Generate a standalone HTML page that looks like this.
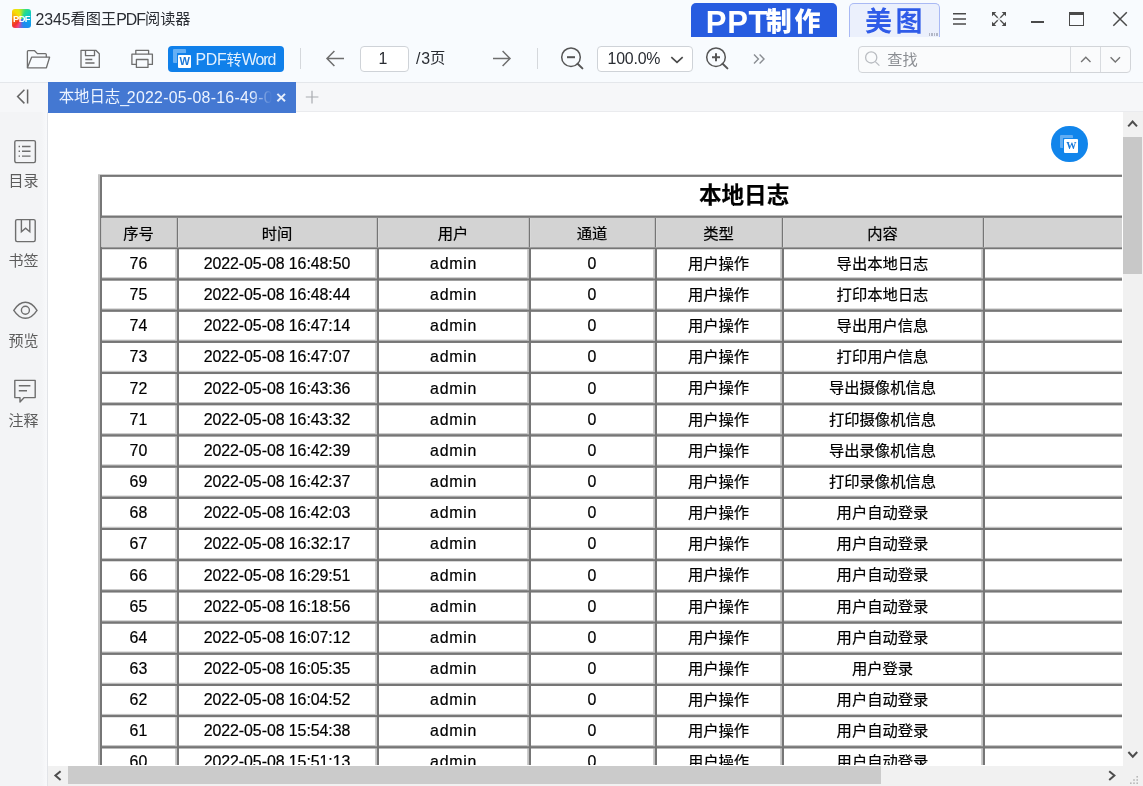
<!DOCTYPE html>
<html lang="zh-CN"><head><meta charset="utf-8"><title>2345看图王PDF阅读器</title>
<style>
html,body{margin:0;padding:0}
body{width:1143px;height:786px;overflow:hidden;position:relative;background:#fff;font-family:"Liberation Sans","Noto Sans CJK SC",sans-serif;-webkit-font-smoothing:antialiased}
.a{position:absolute;display:block}
.ln{display:flex;align-items:center;white-space:nowrap}
.ln>span{display:block;flex:none}
.cj{position:relative;display:block;flex:none;white-space:nowrap;line-height:1;letter-spacing:0;font-family:"Liberation Sans","Noto Sans CJK SC",sans-serif}
</style></head>
<body>
<div id="app" style="position:absolute;left:0;top:0;width:1143px;height:786px;will-change:transform">
<div class="a" style="left:0;top:0;width:1143px;height:82px;background:#f8fbfe"></div>
<div class="a" style="left:0;top:82px;width:1143px;height:1px;background:#e4e7eb"></div>
<div class="a" style="left:0;top:83px;width:1143px;height:29px;background:#f6f7f9"></div>
<div class="a" style="left:296px;top:111px;width:847px;height:1px;background:#eaebee"></div>
<div class="a" style="left:0;top:112px;width:41px;height:674px;background:#f3f4f6"></div>
<div class="a" style="left:41px;top:112px;width:6px;height:674px;background:linear-gradient(90deg,#f3f4f6,#f8f9fb)"></div>
<div class="a" style="left:47px;top:112px;width:1px;height:674px;background:#e2e4e8"></div>
<div class="a" style="left:48px;top:112px;width:1075px;height:654px;background:#fff"></div>
<div class="a" style="left:12px;top:9px;width:19px;height:19px;border-radius:3px;overflow:hidden;background:conic-gradient(from 0deg at 50% 52%,#9ae63c 0deg,#2fdc86 25deg,#14d4ae 50deg,#10b4dc 85deg,#1196ee 125deg,#2a84ee 165deg,#7a62d8 185deg,#ee4686 203deg,#f2302a 228deg,#f4641e 255deg,#f5a11c 280deg,#f8dc06 318deg,#e2e614 342deg,#9ae63c 360deg)">
<div class="a" style="left:-1px;top:3.9px;width:21px;height:12px;line-height:12px;font-size:9.3px;font-weight:bold;color:#fff;text-align:center;letter-spacing:-0.55px">PDF</div></div>
<div class="a ln" style="left:35.6px;top:8.6px;height:22px;line-height:22px;font-size:15.9px;color:#2a2d33;"><span style="letter-spacing:-0.1px;margin-right:0px">2345</span><span class="cj" style="width:45.6px;height:15.2px;font-size:15.2px;top:-0.6px;">看图王</span><span style="letter-spacing:-1px;margin-right:0px">PDF</span><span class="cj" style="width:45.6px;height:15.2px;font-size:15.2px;top:-0.6px;">阅读器</span></div>
<div class="a" style="left:691px;top:2.5px;width:146px;height:34.5px;background:#275ce0;border-radius:5px 5px 0 0"></div>
<div class="a" style="left:705.8px;top:4.6px;height:36px;line-height:36px;font-size:31px;font-weight:bold;color:#fff;letter-spacing:.7px;white-space:nowrap">PPT</div>
<div class="a" style="left:765.8px;top:9.3px"><span class="cj" style="width:54.8px;height:26.78px;font-size:26px;line-height:26.78px;font-weight:900;color:#fff;letter-spacing:2.8px;">制作</span></div>
<div class="a" style="left:849px;top:2.5px;width:91px;height:34.5px;box-sizing:border-box;background:#ebf0fc;border:1.6px solid #a9b9f4;border-bottom:none;border-radius:5px 5px 0 0"></div>
<div class="a" style="left:865px;top:8.2px"><span class="cj" style="width:57.5px;height:28.08px;font-size:27px;line-height:28.08px;font-weight:bold;color:#2f5be8;letter-spacing:3.5px;">美图</span></div>
<div class="a" style="left:928.5px;top:33.2px;width:10.4px;height:3px;background:repeating-linear-gradient(90deg,#a4a9b8 0,#a4a9b8 1.4px,transparent 1.4px,transparent 2.4px);opacity:.8"></div>
<svg class="a" style="left:950px;top:8px" width="20" height="22" viewBox="0 0 20 22" fill="none" stroke="#4a4a4a" stroke-width="1.5"><path d="M3 5.8H16M3 10.9H16M3 16H16"/></svg>
<svg class="a" style="left:989px;top:9px" width="20" height="20" viewBox="0 0 20 20" fill="#4a4a4a" stroke="#4a4a4a" stroke-width="1.25"><path d="M4.5 4.5L8.7 8.7M15.5 4.5L11.3 8.7M4.5 15.5L8.7 11.3M15.5 15.5L11.3 11.3" fill="none"/><path d="M3 3H7.3L3 7.3ZM17 3V7.3L12.7 3ZM3 17V12.7L7.3 17ZM17 17H12.7L17 12.7Z" stroke="none"/><rect x="8.8" y="8.8" width="2.4" height="2.4" fill="#c9cbcd" stroke="none"/></svg>
<div class="a" style="left:1031px;top:21.3px;width:13px;height:1.6px;background:#4a4a4a"></div>
<div class="a" style="left:1069px;top:12px;width:14.5px;height:13.5px;box-sizing:border-box;border:1.5px solid #4a4a4a;border-top-width:3px"></div>
<svg class="a" style="left:1110px;top:9px" width="20" height="20" viewBox="0 0 20 20" fill="none" stroke="#4a4a4a" stroke-width="1.5"><path d="M3.3 3.3L16.8 16.8M16.8 3.3L3.3 16.8"/></svg>
<svg class="a" style="left:24px;top:46px" width="30" height="26" viewBox="0 0 30 26" fill="none" stroke="#6e6e6e" stroke-width="1.3" stroke-linejoin="round"><path d="M3.4 21.6V5.6Q3.4 4.7 4.3 4.7H10.6L13.4 7.6H21.4Q22.3 7.6 22.3 8.5V11.2"/><path d="M7.6 11.2H25.6L22.4 21.8H3.4Z"/></svg>
<svg class="a" style="left:76px;top:46px" width="28" height="26" viewBox="0 0 28 26" fill="none" stroke="#6e6e6e" stroke-width="1.3" stroke-linejoin="round"><path d="M5 4.3H19.8L23.3 7.8V21.4H5Z"/><path d="M9.5 4.3V9.7H18.5V4.3"/><path d="M9.3 13.5H16.3M9.3 17H18.5"/></svg>
<svg class="a" style="left:128px;top:46px" width="28" height="26" viewBox="0 0 28 26" fill="none" stroke="#6e6e6e" stroke-width="1.3" stroke-linejoin="round"><path d="M7.8 8.2V4.3H20.6V8.2"/><path d="M8.4 18.4H3.9V8.2H24.4V18.4H20"/><path d="M8.4 13.5H20V21.4H8.4Z"/></svg>
<div class="a" style="left:168px;top:46px;width:116px;height:26px;background:#1080ea;border-radius:4px"></div>
<div class="a" style="left:173px;top:49.4px;width:13.3px;height:13.6px;background:#66b0f5;border-radius:1px"></div>
<div class="a" style="left:176.6px;top:53.1px;width:15px;height:15px;background:#1080ea"></div>
<div class="a" style="left:177.8px;top:54.6px;width:13.6px;height:13.6px;background:#fff;border-radius:1px;color:#1b78d8;font-size:11px;font-weight:bold;line-height:13.8px;text-align:center;letter-spacing:-.3px">W</div>
<div class="a ln" style="left:195.5px;top:48.9px;height:22px;line-height:22px;font-size:15.9px;color:#e2f0fe;"><span style="letter-spacing:-0.25px;margin-right:0px">PDF</span><span class="cj" style="width:15.3px;height:15.3px;font-size:15.3px;top:-0.7px;">转</span><span style="letter-spacing:-1.05px;margin-right:0px">Word</span></div>
<div class="a" style="left:300px;top:48px;width:1px;height:21px;background:#d5d8dc"></div>
<div class="a" style="left:537px;top:48px;width:1px;height:21px;background:#d5d8dc"></div>
<svg class="a" style="left:324px;top:48px" width="22" height="22" viewBox="0 0 22 22" fill="none" stroke="#6e6e6e" stroke-width="1.5" stroke-linejoin="miter"><path d="M20 10.5H3.2M10.4 3L3 10.5L10.4 18"/></svg>
<svg class="a" style="left:491px;top:48px" width="22" height="22" viewBox="0 0 22 22" fill="none" stroke="#6e6e6e" stroke-width="1.5"><path d="M2 10.5H18.8M11.6 3L19 10.5L11.6 18"/></svg>
<div class="a" style="left:360px;top:46px;width:49px;height:26px;box-sizing:border-box;background:#fff;border:1px solid #cfd3d8;border-radius:4px;text-align:center;line-height:24.6px;font-size:15.9px;color:#2a2d33;text-indent:-3px">1</div>
<div class="a ln" style="left:416px;top:48.1px;height:22px;line-height:22px;font-size:15.9px;color:#2a2d33;"><span style="letter-spacing:0.8px;margin-right:-0.8px">/3</span><span class="cj" style="width:15.3px;height:15.3px;font-size:15.3px;top:-1px;">页</span></div>
<svg class="a" style="left:560px;top:46px" width="26" height="26" viewBox="0 0 26 26" fill="none" stroke="#555" stroke-width="1.5"><circle cx="11" cy="11.2" r="9.3"/><path d="M17.6 17.8L22.4 22.4" stroke-width="2" stroke-linecap="round"/><path d="M7 11.2H15" stroke-width="2"/></svg>
<svg class="a" style="left:705px;top:46px" width="26" height="26" viewBox="0 0 26 26" fill="none" stroke="#555" stroke-width="1.5"><circle cx="11" cy="11.2" r="9.3"/><path d="M17.6 17.8L22.4 22.4" stroke-width="2" stroke-linecap="round"/><path d="M7 11.2H15M11 7.2V15.2" stroke-width="2"/></svg>
<div class="a" style="left:597px;top:46px;width:95.5px;height:26px;box-sizing:border-box;background:#fff;border:1px solid #cfd3d8;border-radius:4px"></div>
<div class="a ln" style="left:607.6px;top:48.1px;height:22px;line-height:22px;font-size:15.9px;color:#2a2d33;letter-spacing:-.22px">100.0%</div>
<svg class="a" style="left:668px;top:52px" width="18" height="14" viewBox="0 0 18 14" fill="none" stroke="#4a4a4a" stroke-width="1.7"><path d="M3.3 5.2L9 10.3L14.7 5.2"/></svg>
<svg class="a" style="left:750px;top:50px" width="18" height="18" viewBox="0 0 18 18" fill="none" stroke="#8a8d92" stroke-width="1.4"><path d="M4 4.6L8.4 9L4 13.4M9.6 4.6L14 9L9.6 13.4"/></svg>
<div class="a" style="left:858px;top:45.5px;width:273px;height:27.5px;box-sizing:border-box;background:#fafbfc;border:1px solid #d2d5d9;border-radius:4px"></div>
<div class="a" style="left:1070px;top:46.5px;width:1px;height:25.5px;background:#d8dbdf"></div>
<div class="a" style="left:1100px;top:46.5px;width:1px;height:25.5px;background:#d8dbdf"></div>
<svg class="a" style="left:862px;top:48.2px" width="20" height="20" viewBox="0 0 20 20" fill="none" stroke="#b9bcc1" stroke-width="1.3"><circle cx="9.2" cy="9.4" r="5.6"/><path d="M13.3 13.6L17.4 17.6"/></svg>
<div class="a ln" style="left:887.2px;top:48.4px;height:22px;line-height:22px;font-size:15.2px;color:#8a8d92;"><span class="cj" style="width:30.4px;height:15.2px;font-size:15.2px;">查找</span></div>
<svg class="a" style="left:1077px;top:52px" width="18" height="14" viewBox="0 0 18 14" fill="none" stroke="#747474" stroke-width="1.4"><path d="M4.1 10L8.8 5.3L13.5 10"/></svg>
<svg class="a" style="left:1106px;top:52px" width="18" height="14" viewBox="0 0 18 14" fill="none" stroke="#747474" stroke-width="1.4"><path d="M4.6 5.2L9.3 9.9L14 5.2"/></svg>
<svg class="a" style="left:14px;top:86px" width="18" height="22" viewBox="0 0 18 22" fill="none" stroke="#666" stroke-width="1.5"><path d="M10.4 3.8L3.6 10.6L10.4 17.4M13.6 3.6V17.6"/></svg>
<div class="a" style="left:48px;top:82px;width:248px;height:30.5px;background:#4478d2"></div>
<div class="a ln" style="left:58.7px;top:87.3px;height:22px;line-height:22px;font-size:15.9px;color:#edf4ff;letter-spacing:0.26px;width:213.3px;overflow:hidden;-webkit-mask-image:linear-gradient(90deg,#000 0,#000 191px,transparent 213px);mask-image:linear-gradient(90deg,#000 0,#000 191px,transparent 213px);"><span class="cj" style="width:61.6px;height:15.4px;font-size:15.4px;top:-1.3px;">本地日志</span><span><span style="margin-right:-2.6px">_</span>2022-05-08-16-49-0</span></div>
<svg class="a" style="left:274px;top:90px" width="14" height="14" viewBox="0 0 14 14" fill="none" stroke="#e8effb" stroke-width="2"><path d="M3.4 3.9L11 11.3M11 3.9L3.4 11.3"/></svg>
<svg class="a" style="left:304px;top:89px" width="16" height="16" viewBox="0 0 16 16" fill="none" stroke="#a8abb0" stroke-width="1.2"><path d="M8 1.8V14.4M1.8 8H14.4"/></svg>
<svg class="a" style="left:12px;top:138px" width="26" height="27" viewBox="0 0 26 27" fill="none" stroke="#6e6e6e" stroke-width="1.4"><rect x="2.8" y="2.6" width="20.6" height="22" rx="1.5"/><path d="M10 8.5H18.5M10 13.3H18.5M10 18.1H18.5M6.6 8.5H8M6.6 13.3H8M6.6 18.1H8"/></svg>
<div class="a ln" style="left:8.5px;top:170.7px;height:20px;line-height:20px;font-size:15px;color:#5c5c5c;"><span class="cj" style="width:30px;height:15px;font-size:15px;">目录</span></div>
<svg class="a" style="left:12px;top:217px" width="26" height="27" viewBox="0 0 26 27" fill="none" stroke="#6e6e6e" stroke-width="1.4"><rect x="3.6" y="2.6" width="19.6" height="22" rx="1.5"/><path d="M9.4 2.6V14.8L13.6 11.2L17.8 14.8V2.6"/></svg>
<div class="a ln" style="left:8.5px;top:250.7px;height:20px;line-height:20px;font-size:15px;color:#5c5c5c;"><span class="cj" style="width:30px;height:15px;font-size:15px;">书签</span></div>
<svg class="a" style="left:12px;top:298px" width="28" height="24" viewBox="0 0 28 24" fill="none" stroke="#6e6e6e" stroke-width="1.4"><path d="M1.8 12.3Q7 4.3 13.4 4.3Q19.8 4.3 25 12.3Q19.8 20.3 13.4 20.3Q7 20.3 1.8 12.3Z"/><circle cx="13.4" cy="12.3" r="4"/></svg>
<div class="a ln" style="left:8.5px;top:330.7px;height:20px;line-height:20px;font-size:15px;color:#5c5c5c;"><span class="cj" style="width:30px;height:15px;font-size:15px;">预览</span></div>
<svg class="a" style="left:12px;top:377px" width="26" height="28" viewBox="0 0 26 28" fill="none" stroke="#6e6e6e" stroke-width="1.4" stroke-linejoin="round"><path d="M2.8 3.4H23.2V20.6H12.2L8 25V20.6H2.8Z"/><path d="M6.8 8.8H18.4M6.8 13.8H15"/></svg>
<div class="a ln" style="left:8.5px;top:410.7px;height:20px;line-height:20px;font-size:15px;color:#5c5c5c;"><span class="cj" style="width:30px;height:15px;font-size:15px;">注释</span></div>
<svg class="a" style="left:98px;top:174px" width="1024" height="591" viewBox="0 0 1024 591" shape-rendering="auto"><rect x="3" y="44" width="1030" height="29.2" fill="#d3d3d3"/><rect x="0" y="0" width="2" height="591" fill="#c2c2c2"/><rect x="2" y="1" width="2" height="591" fill="#767676"/><rect x="3.1" y="44" width="1" height="29.1" fill="#d3d3d3"/><rect x="0" y="0" width="1030" height="1" fill="#cfcfcf"/><rect x="2" y="1" width="1030" height="1.9" fill="#767676"/><rect x="4" y="41.05" width="1030" height="0.9" fill="#c2c2c2"/><rect x="3" y="41.85" width="1030" height="2" fill="#767676"/><rect x="3" y="73.3" width="1030" height="1.95" fill="#767676"/><rect x="4" y="103.24" width="1030" height="1.3" fill="#c2c2c2"/><rect x="3" y="104.49" width="1030" height="1.95" fill="#767676"/><rect x="4" y="134.43" width="1030" height="1.3" fill="#c2c2c2"/><rect x="3" y="135.68" width="1030" height="1.95" fill="#767676"/><rect x="4" y="165.62" width="1030" height="1.3" fill="#c2c2c2"/><rect x="3" y="166.87" width="1030" height="1.95" fill="#767676"/><rect x="4" y="196.81" width="1030" height="1.3" fill="#c2c2c2"/><rect x="3" y="198.06" width="1030" height="1.95" fill="#767676"/><rect x="4" y="228" width="1030" height="1.3" fill="#c2c2c2"/><rect x="3" y="229.25" width="1030" height="1.95" fill="#767676"/><rect x="4" y="259.19" width="1030" height="1.3" fill="#c2c2c2"/><rect x="3" y="260.44" width="1030" height="1.95" fill="#767676"/><rect x="4" y="290.38" width="1030" height="1.3" fill="#c2c2c2"/><rect x="3" y="291.63" width="1030" height="1.95" fill="#767676"/><rect x="4" y="321.57" width="1030" height="1.3" fill="#c2c2c2"/><rect x="3" y="322.82" width="1030" height="1.95" fill="#767676"/><rect x="4" y="352.76" width="1030" height="1.3" fill="#c2c2c2"/><rect x="3" y="354.01" width="1030" height="1.95" fill="#767676"/><rect x="4" y="383.95" width="1030" height="1.3" fill="#c2c2c2"/><rect x="3" y="385.2" width="1030" height="1.95" fill="#767676"/><rect x="4" y="415.14" width="1030" height="1.3" fill="#c2c2c2"/><rect x="3" y="416.39" width="1030" height="1.95" fill="#767676"/><rect x="4" y="446.33" width="1030" height="1.3" fill="#c2c2c2"/><rect x="3" y="447.58" width="1030" height="1.95" fill="#767676"/><rect x="4" y="477.52" width="1030" height="1.3" fill="#c2c2c2"/><rect x="3" y="478.77" width="1030" height="1.95" fill="#767676"/><rect x="4" y="508.71" width="1030" height="1.3" fill="#c2c2c2"/><rect x="3" y="509.96" width="1030" height="1.95" fill="#767676"/><rect x="4" y="539.9" width="1030" height="1.3" fill="#c2c2c2"/><rect x="3" y="541.15" width="1030" height="1.95" fill="#767676"/><rect x="4" y="571.09" width="1030" height="1.3" fill="#c2c2c2"/><rect x="3" y="572.34" width="1030" height="1.95" fill="#767676"/><rect x="78.8" y="44" width="1.3" height="29.2" fill="#767676"/><rect x="80.1" y="44" width="1" height="29.2" fill="#dadada"/><rect x="77.2" y="75" width="1.8" height="591" fill="#c2c2c2"/><rect x="79" y="75" width="2" height="591" fill="#767676"/><rect x="278.8" y="44" width="1.3" height="29.2" fill="#767676"/><rect x="280.1" y="44" width="1" height="29.2" fill="#dadada"/><rect x="277.2" y="75" width="1.8" height="591" fill="#c2c2c2"/><rect x="279" y="75" width="2" height="591" fill="#767676"/><rect x="430.8" y="44" width="1.3" height="29.2" fill="#767676"/><rect x="432.1" y="44" width="1" height="29.2" fill="#dadada"/><rect x="429.2" y="75" width="1.8" height="591" fill="#c2c2c2"/><rect x="431" y="75" width="2" height="591" fill="#767676"/><rect x="556.8" y="44" width="1.3" height="29.2" fill="#767676"/><rect x="558.1" y="44" width="1" height="29.2" fill="#dadada"/><rect x="555.2" y="75" width="1.8" height="591" fill="#c2c2c2"/><rect x="557" y="75" width="2" height="591" fill="#767676"/><rect x="683.8" y="44" width="1.3" height="29.2" fill="#767676"/><rect x="685.1" y="44" width="1" height="29.2" fill="#dadada"/><rect x="682.2" y="75" width="1.8" height="591" fill="#c2c2c2"/><rect x="684" y="75" width="2" height="591" fill="#767676"/><rect x="884.8" y="44" width="1.3" height="29.2" fill="#767676"/><rect x="886.1" y="44" width="1" height="29.2" fill="#dadada"/><rect x="883.2" y="75" width="1.8" height="591" fill="#c2c2c2"/><rect x="885" y="75" width="2" height="591" fill="#767676"/><rect x="3" y="104.49" width="1030" height="1.95" fill="#767676"/><rect x="3" y="135.68" width="1030" height="1.95" fill="#767676"/><rect x="3" y="166.87" width="1030" height="1.95" fill="#767676"/><rect x="3" y="198.06" width="1030" height="1.95" fill="#767676"/><rect x="3" y="229.25" width="1030" height="1.95" fill="#767676"/><rect x="3" y="260.44" width="1030" height="1.95" fill="#767676"/><rect x="3" y="291.63" width="1030" height="1.95" fill="#767676"/><rect x="3" y="322.82" width="1030" height="1.95" fill="#767676"/><rect x="3" y="354.01" width="1030" height="1.95" fill="#767676"/><rect x="3" y="385.2" width="1030" height="1.95" fill="#767676"/><rect x="3" y="416.39" width="1030" height="1.95" fill="#767676"/><rect x="3" y="447.58" width="1030" height="1.95" fill="#767676"/><rect x="3" y="478.77" width="1030" height="1.95" fill="#767676"/><rect x="3" y="509.96" width="1030" height="1.95" fill="#767676"/><rect x="3" y="541.15" width="1030" height="1.95" fill="#767676"/><rect x="3" y="572.34" width="1030" height="1.95" fill="#767676"/></svg>
<div class="a" style="left:98px;top:174px;width:1024px;height:591px;overflow:hidden">
<div class="a ln" style="left:496.1px;top:9.9px;height:24px;line-height:24px;font-size:22.6px;color:#000;font-weight:bold;width:300px;justify-content:center;-webkit-text-stroke:0.2px #000;"><span class="cj" style="width:90.4px;height:22.6px;font-size:22.6px;">本地日志</span></div>
<div class="a ln" style="left:-109.5px;top:47.8px;height:24px;line-height:24px;font-size:15.3px;color:#000;width:300px;justify-content:center;-webkit-text-stroke:0.2px #000;"><span class="cj" style="width:30.6px;height:15.3px;font-size:15.3px;">序号</span></div>
<div class="a ln" style="left:29px;top:47.8px;height:24px;line-height:24px;font-size:15.3px;color:#000;width:300px;justify-content:center;-webkit-text-stroke:0.2px #000;"><span class="cj" style="width:30.6px;height:15.3px;font-size:15.3px;">时间</span></div>
<div class="a ln" style="left:205px;top:47.8px;height:24px;line-height:24px;font-size:15.3px;color:#000;width:300px;justify-content:center;-webkit-text-stroke:0.2px #000;"><span class="cj" style="width:30.6px;height:15.3px;font-size:15.3px;">用户</span></div>
<div class="a ln" style="left:344px;top:47.8px;height:24px;line-height:24px;font-size:15.3px;color:#000;width:300px;justify-content:center;-webkit-text-stroke:0.2px #000;"><span class="cj" style="width:30.6px;height:15.3px;font-size:15.3px;">通道</span></div>
<div class="a ln" style="left:470.5px;top:47.8px;height:24px;line-height:24px;font-size:15.3px;color:#000;width:300px;justify-content:center;-webkit-text-stroke:0.2px #000;"><span class="cj" style="width:30.6px;height:15.3px;font-size:15.3px;">类型</span></div>
<div class="a ln" style="left:634.5px;top:47.8px;height:24px;line-height:24px;font-size:15.3px;color:#000;width:300px;justify-content:center;-webkit-text-stroke:0.2px #000;"><span class="cj" style="width:30.6px;height:15.3px;font-size:15.3px;">内容</span></div>
<div class="a ln" style="left:-109.5px;top:77.9px;height:24px;line-height:24px;font-size:15.9px;color:#000;letter-spacing:0.1px;width:300px;justify-content:center;-webkit-text-stroke:0.2px #000;"><span>76</span></div>
<div class="a ln" style="left:29px;top:77.9px;height:24px;line-height:24px;font-size:15.9px;color:#000;letter-spacing:-0.05px;width:300px;justify-content:center;-webkit-text-stroke:0.2px #000;"><span>2022-05-08&nbsp;16:48:50</span></div>
<div class="a ln" style="left:205.6px;top:77.9px;height:24px;line-height:24px;font-size:15.9px;color:#000;letter-spacing:0.75px;width:300px;justify-content:center;-webkit-text-stroke:0.2px #000;"><span>admin</span></div>
<div class="a ln" style="left:344px;top:77.9px;height:24px;line-height:24px;font-size:15.9px;color:#000;width:300px;justify-content:center;-webkit-text-stroke:0.2px #000;"><span>0</span></div>
<div class="a ln" style="left:470.5px;top:77.5px;height:24px;line-height:24px;font-size:15.3px;color:#000;width:300px;justify-content:center;-webkit-text-stroke:0.2px #000;"><span class="cj" style="width:61.2px;height:15.3px;font-size:15.3px;">用户操作</span></div>
<div class="a ln" style="left:634.5px;top:77.5px;height:24px;line-height:24px;font-size:15.3px;color:#000;width:300px;justify-content:center;-webkit-text-stroke:0.2px #000;"><span class="cj" style="width:91.8px;height:15.3px;font-size:15.3px;">导出本地日志</span></div>
<div class="a ln" style="left:-109.5px;top:109.06px;height:24px;line-height:24px;font-size:15.9px;color:#000;letter-spacing:0.1px;width:300px;justify-content:center;-webkit-text-stroke:0.2px #000;"><span>75</span></div>
<div class="a ln" style="left:29px;top:109.06px;height:24px;line-height:24px;font-size:15.9px;color:#000;letter-spacing:-0.05px;width:300px;justify-content:center;-webkit-text-stroke:0.2px #000;"><span>2022-05-08&nbsp;16:48:44</span></div>
<div class="a ln" style="left:205.6px;top:109.06px;height:24px;line-height:24px;font-size:15.9px;color:#000;letter-spacing:0.75px;width:300px;justify-content:center;-webkit-text-stroke:0.2px #000;"><span>admin</span></div>
<div class="a ln" style="left:344px;top:109.06px;height:24px;line-height:24px;font-size:15.9px;color:#000;width:300px;justify-content:center;-webkit-text-stroke:0.2px #000;"><span>0</span></div>
<div class="a ln" style="left:470.5px;top:108.66px;height:24px;line-height:24px;font-size:15.3px;color:#000;width:300px;justify-content:center;-webkit-text-stroke:0.2px #000;"><span class="cj" style="width:61.2px;height:15.3px;font-size:15.3px;">用户操作</span></div>
<div class="a ln" style="left:634.5px;top:108.66px;height:24px;line-height:24px;font-size:15.3px;color:#000;width:300px;justify-content:center;-webkit-text-stroke:0.2px #000;"><span class="cj" style="width:91.8px;height:15.3px;font-size:15.3px;">打印本地日志</span></div>
<div class="a ln" style="left:-109.5px;top:140.22px;height:24px;line-height:24px;font-size:15.9px;color:#000;letter-spacing:0.1px;width:300px;justify-content:center;-webkit-text-stroke:0.2px #000;"><span>74</span></div>
<div class="a ln" style="left:29px;top:140.22px;height:24px;line-height:24px;font-size:15.9px;color:#000;letter-spacing:-0.05px;width:300px;justify-content:center;-webkit-text-stroke:0.2px #000;"><span>2022-05-08&nbsp;16:47:14</span></div>
<div class="a ln" style="left:205.6px;top:140.22px;height:24px;line-height:24px;font-size:15.9px;color:#000;letter-spacing:0.75px;width:300px;justify-content:center;-webkit-text-stroke:0.2px #000;"><span>admin</span></div>
<div class="a ln" style="left:344px;top:140.22px;height:24px;line-height:24px;font-size:15.9px;color:#000;width:300px;justify-content:center;-webkit-text-stroke:0.2px #000;"><span>0</span></div>
<div class="a ln" style="left:470.5px;top:139.82px;height:24px;line-height:24px;font-size:15.3px;color:#000;width:300px;justify-content:center;-webkit-text-stroke:0.2px #000;"><span class="cj" style="width:61.2px;height:15.3px;font-size:15.3px;">用户操作</span></div>
<div class="a ln" style="left:634.5px;top:139.82px;height:24px;line-height:24px;font-size:15.3px;color:#000;width:300px;justify-content:center;-webkit-text-stroke:0.2px #000;"><span class="cj" style="width:91.8px;height:15.3px;font-size:15.3px;">导出用户信息</span></div>
<div class="a ln" style="left:-109.5px;top:171.38px;height:24px;line-height:24px;font-size:15.9px;color:#000;letter-spacing:0.1px;width:300px;justify-content:center;-webkit-text-stroke:0.2px #000;"><span>73</span></div>
<div class="a ln" style="left:29px;top:171.38px;height:24px;line-height:24px;font-size:15.9px;color:#000;letter-spacing:-0.05px;width:300px;justify-content:center;-webkit-text-stroke:0.2px #000;"><span>2022-05-08&nbsp;16:47:07</span></div>
<div class="a ln" style="left:205.6px;top:171.38px;height:24px;line-height:24px;font-size:15.9px;color:#000;letter-spacing:0.75px;width:300px;justify-content:center;-webkit-text-stroke:0.2px #000;"><span>admin</span></div>
<div class="a ln" style="left:344px;top:171.38px;height:24px;line-height:24px;font-size:15.9px;color:#000;width:300px;justify-content:center;-webkit-text-stroke:0.2px #000;"><span>0</span></div>
<div class="a ln" style="left:470.5px;top:170.98px;height:24px;line-height:24px;font-size:15.3px;color:#000;width:300px;justify-content:center;-webkit-text-stroke:0.2px #000;"><span class="cj" style="width:61.2px;height:15.3px;font-size:15.3px;">用户操作</span></div>
<div class="a ln" style="left:634.5px;top:170.98px;height:24px;line-height:24px;font-size:15.3px;color:#000;width:300px;justify-content:center;-webkit-text-stroke:0.2px #000;"><span class="cj" style="width:91.8px;height:15.3px;font-size:15.3px;">打印用户信息</span></div>
<div class="a ln" style="left:-109.5px;top:202.54px;height:24px;line-height:24px;font-size:15.9px;color:#000;letter-spacing:0.1px;width:300px;justify-content:center;-webkit-text-stroke:0.2px #000;"><span>72</span></div>
<div class="a ln" style="left:29px;top:202.54px;height:24px;line-height:24px;font-size:15.9px;color:#000;letter-spacing:-0.05px;width:300px;justify-content:center;-webkit-text-stroke:0.2px #000;"><span>2022-05-08&nbsp;16:43:36</span></div>
<div class="a ln" style="left:205.6px;top:202.54px;height:24px;line-height:24px;font-size:15.9px;color:#000;letter-spacing:0.75px;width:300px;justify-content:center;-webkit-text-stroke:0.2px #000;"><span>admin</span></div>
<div class="a ln" style="left:344px;top:202.54px;height:24px;line-height:24px;font-size:15.9px;color:#000;width:300px;justify-content:center;-webkit-text-stroke:0.2px #000;"><span>0</span></div>
<div class="a ln" style="left:470.5px;top:202.14px;height:24px;line-height:24px;font-size:15.3px;color:#000;width:300px;justify-content:center;-webkit-text-stroke:0.2px #000;"><span class="cj" style="width:61.2px;height:15.3px;font-size:15.3px;">用户操作</span></div>
<div class="a ln" style="left:634.5px;top:202.14px;height:24px;line-height:24px;font-size:15.3px;color:#000;width:300px;justify-content:center;-webkit-text-stroke:0.2px #000;"><span class="cj" style="width:107.1px;height:15.3px;font-size:15.3px;">导出摄像机信息</span></div>
<div class="a ln" style="left:-109.5px;top:233.7px;height:24px;line-height:24px;font-size:15.9px;color:#000;letter-spacing:0.1px;width:300px;justify-content:center;-webkit-text-stroke:0.2px #000;"><span>71</span></div>
<div class="a ln" style="left:29px;top:233.7px;height:24px;line-height:24px;font-size:15.9px;color:#000;letter-spacing:-0.05px;width:300px;justify-content:center;-webkit-text-stroke:0.2px #000;"><span>2022-05-08&nbsp;16:43:32</span></div>
<div class="a ln" style="left:205.6px;top:233.7px;height:24px;line-height:24px;font-size:15.9px;color:#000;letter-spacing:0.75px;width:300px;justify-content:center;-webkit-text-stroke:0.2px #000;"><span>admin</span></div>
<div class="a ln" style="left:344px;top:233.7px;height:24px;line-height:24px;font-size:15.9px;color:#000;width:300px;justify-content:center;-webkit-text-stroke:0.2px #000;"><span>0</span></div>
<div class="a ln" style="left:470.5px;top:233.3px;height:24px;line-height:24px;font-size:15.3px;color:#000;width:300px;justify-content:center;-webkit-text-stroke:0.2px #000;"><span class="cj" style="width:61.2px;height:15.3px;font-size:15.3px;">用户操作</span></div>
<div class="a ln" style="left:634.5px;top:233.3px;height:24px;line-height:24px;font-size:15.3px;color:#000;width:300px;justify-content:center;-webkit-text-stroke:0.2px #000;"><span class="cj" style="width:107.1px;height:15.3px;font-size:15.3px;">打印摄像机信息</span></div>
<div class="a ln" style="left:-109.5px;top:264.86px;height:24px;line-height:24px;font-size:15.9px;color:#000;letter-spacing:0.1px;width:300px;justify-content:center;-webkit-text-stroke:0.2px #000;"><span>70</span></div>
<div class="a ln" style="left:29px;top:264.86px;height:24px;line-height:24px;font-size:15.9px;color:#000;letter-spacing:-0.05px;width:300px;justify-content:center;-webkit-text-stroke:0.2px #000;"><span>2022-05-08&nbsp;16:42:39</span></div>
<div class="a ln" style="left:205.6px;top:264.86px;height:24px;line-height:24px;font-size:15.9px;color:#000;letter-spacing:0.75px;width:300px;justify-content:center;-webkit-text-stroke:0.2px #000;"><span>admin</span></div>
<div class="a ln" style="left:344px;top:264.86px;height:24px;line-height:24px;font-size:15.9px;color:#000;width:300px;justify-content:center;-webkit-text-stroke:0.2px #000;"><span>0</span></div>
<div class="a ln" style="left:470.5px;top:264.46px;height:24px;line-height:24px;font-size:15.3px;color:#000;width:300px;justify-content:center;-webkit-text-stroke:0.2px #000;"><span class="cj" style="width:61.2px;height:15.3px;font-size:15.3px;">用户操作</span></div>
<div class="a ln" style="left:634.5px;top:264.46px;height:24px;line-height:24px;font-size:15.3px;color:#000;width:300px;justify-content:center;-webkit-text-stroke:0.2px #000;"><span class="cj" style="width:107.1px;height:15.3px;font-size:15.3px;">导出录像机信息</span></div>
<div class="a ln" style="left:-109.5px;top:296.02px;height:24px;line-height:24px;font-size:15.9px;color:#000;letter-spacing:0.1px;width:300px;justify-content:center;-webkit-text-stroke:0.2px #000;"><span>69</span></div>
<div class="a ln" style="left:29px;top:296.02px;height:24px;line-height:24px;font-size:15.9px;color:#000;letter-spacing:-0.05px;width:300px;justify-content:center;-webkit-text-stroke:0.2px #000;"><span>2022-05-08&nbsp;16:42:37</span></div>
<div class="a ln" style="left:205.6px;top:296.02px;height:24px;line-height:24px;font-size:15.9px;color:#000;letter-spacing:0.75px;width:300px;justify-content:center;-webkit-text-stroke:0.2px #000;"><span>admin</span></div>
<div class="a ln" style="left:344px;top:296.02px;height:24px;line-height:24px;font-size:15.9px;color:#000;width:300px;justify-content:center;-webkit-text-stroke:0.2px #000;"><span>0</span></div>
<div class="a ln" style="left:470.5px;top:295.62px;height:24px;line-height:24px;font-size:15.3px;color:#000;width:300px;justify-content:center;-webkit-text-stroke:0.2px #000;"><span class="cj" style="width:61.2px;height:15.3px;font-size:15.3px;">用户操作</span></div>
<div class="a ln" style="left:634.5px;top:295.62px;height:24px;line-height:24px;font-size:15.3px;color:#000;width:300px;justify-content:center;-webkit-text-stroke:0.2px #000;"><span class="cj" style="width:107.1px;height:15.3px;font-size:15.3px;">打印录像机信息</span></div>
<div class="a ln" style="left:-109.5px;top:327.18px;height:24px;line-height:24px;font-size:15.9px;color:#000;letter-spacing:0.1px;width:300px;justify-content:center;-webkit-text-stroke:0.2px #000;"><span>68</span></div>
<div class="a ln" style="left:29px;top:327.18px;height:24px;line-height:24px;font-size:15.9px;color:#000;letter-spacing:-0.05px;width:300px;justify-content:center;-webkit-text-stroke:0.2px #000;"><span>2022-05-08&nbsp;16:42:03</span></div>
<div class="a ln" style="left:205.6px;top:327.18px;height:24px;line-height:24px;font-size:15.9px;color:#000;letter-spacing:0.75px;width:300px;justify-content:center;-webkit-text-stroke:0.2px #000;"><span>admin</span></div>
<div class="a ln" style="left:344px;top:327.18px;height:24px;line-height:24px;font-size:15.9px;color:#000;width:300px;justify-content:center;-webkit-text-stroke:0.2px #000;"><span>0</span></div>
<div class="a ln" style="left:470.5px;top:326.78px;height:24px;line-height:24px;font-size:15.3px;color:#000;width:300px;justify-content:center;-webkit-text-stroke:0.2px #000;"><span class="cj" style="width:61.2px;height:15.3px;font-size:15.3px;">用户操作</span></div>
<div class="a ln" style="left:634.5px;top:326.78px;height:24px;line-height:24px;font-size:15.3px;color:#000;width:300px;justify-content:center;-webkit-text-stroke:0.2px #000;"><span class="cj" style="width:91.8px;height:15.3px;font-size:15.3px;">用户自动登录</span></div>
<div class="a ln" style="left:-109.5px;top:358.34px;height:24px;line-height:24px;font-size:15.9px;color:#000;letter-spacing:0.1px;width:300px;justify-content:center;-webkit-text-stroke:0.2px #000;"><span>67</span></div>
<div class="a ln" style="left:29px;top:358.34px;height:24px;line-height:24px;font-size:15.9px;color:#000;letter-spacing:-0.05px;width:300px;justify-content:center;-webkit-text-stroke:0.2px #000;"><span>2022-05-08&nbsp;16:32:17</span></div>
<div class="a ln" style="left:205.6px;top:358.34px;height:24px;line-height:24px;font-size:15.9px;color:#000;letter-spacing:0.75px;width:300px;justify-content:center;-webkit-text-stroke:0.2px #000;"><span>admin</span></div>
<div class="a ln" style="left:344px;top:358.34px;height:24px;line-height:24px;font-size:15.9px;color:#000;width:300px;justify-content:center;-webkit-text-stroke:0.2px #000;"><span>0</span></div>
<div class="a ln" style="left:470.5px;top:357.94px;height:24px;line-height:24px;font-size:15.3px;color:#000;width:300px;justify-content:center;-webkit-text-stroke:0.2px #000;"><span class="cj" style="width:61.2px;height:15.3px;font-size:15.3px;">用户操作</span></div>
<div class="a ln" style="left:634.5px;top:357.94px;height:24px;line-height:24px;font-size:15.3px;color:#000;width:300px;justify-content:center;-webkit-text-stroke:0.2px #000;"><span class="cj" style="width:91.8px;height:15.3px;font-size:15.3px;">用户自动登录</span></div>
<div class="a ln" style="left:-109.5px;top:389.5px;height:24px;line-height:24px;font-size:15.9px;color:#000;letter-spacing:0.1px;width:300px;justify-content:center;-webkit-text-stroke:0.2px #000;"><span>66</span></div>
<div class="a ln" style="left:29px;top:389.5px;height:24px;line-height:24px;font-size:15.9px;color:#000;letter-spacing:-0.05px;width:300px;justify-content:center;-webkit-text-stroke:0.2px #000;"><span>2022-05-08&nbsp;16:29:51</span></div>
<div class="a ln" style="left:205.6px;top:389.5px;height:24px;line-height:24px;font-size:15.9px;color:#000;letter-spacing:0.75px;width:300px;justify-content:center;-webkit-text-stroke:0.2px #000;"><span>admin</span></div>
<div class="a ln" style="left:344px;top:389.5px;height:24px;line-height:24px;font-size:15.9px;color:#000;width:300px;justify-content:center;-webkit-text-stroke:0.2px #000;"><span>0</span></div>
<div class="a ln" style="left:470.5px;top:389.1px;height:24px;line-height:24px;font-size:15.3px;color:#000;width:300px;justify-content:center;-webkit-text-stroke:0.2px #000;"><span class="cj" style="width:61.2px;height:15.3px;font-size:15.3px;">用户操作</span></div>
<div class="a ln" style="left:634.5px;top:389.1px;height:24px;line-height:24px;font-size:15.3px;color:#000;width:300px;justify-content:center;-webkit-text-stroke:0.2px #000;"><span class="cj" style="width:91.8px;height:15.3px;font-size:15.3px;">用户自动登录</span></div>
<div class="a ln" style="left:-109.5px;top:420.66px;height:24px;line-height:24px;font-size:15.9px;color:#000;letter-spacing:0.1px;width:300px;justify-content:center;-webkit-text-stroke:0.2px #000;"><span>65</span></div>
<div class="a ln" style="left:29px;top:420.66px;height:24px;line-height:24px;font-size:15.9px;color:#000;letter-spacing:-0.05px;width:300px;justify-content:center;-webkit-text-stroke:0.2px #000;"><span>2022-05-08&nbsp;16:18:56</span></div>
<div class="a ln" style="left:205.6px;top:420.66px;height:24px;line-height:24px;font-size:15.9px;color:#000;letter-spacing:0.75px;width:300px;justify-content:center;-webkit-text-stroke:0.2px #000;"><span>admin</span></div>
<div class="a ln" style="left:344px;top:420.66px;height:24px;line-height:24px;font-size:15.9px;color:#000;width:300px;justify-content:center;-webkit-text-stroke:0.2px #000;"><span>0</span></div>
<div class="a ln" style="left:470.5px;top:420.26px;height:24px;line-height:24px;font-size:15.3px;color:#000;width:300px;justify-content:center;-webkit-text-stroke:0.2px #000;"><span class="cj" style="width:61.2px;height:15.3px;font-size:15.3px;">用户操作</span></div>
<div class="a ln" style="left:634.5px;top:420.26px;height:24px;line-height:24px;font-size:15.3px;color:#000;width:300px;justify-content:center;-webkit-text-stroke:0.2px #000;"><span class="cj" style="width:91.8px;height:15.3px;font-size:15.3px;">用户自动登录</span></div>
<div class="a ln" style="left:-109.5px;top:451.82px;height:24px;line-height:24px;font-size:15.9px;color:#000;letter-spacing:0.1px;width:300px;justify-content:center;-webkit-text-stroke:0.2px #000;"><span>64</span></div>
<div class="a ln" style="left:29px;top:451.82px;height:24px;line-height:24px;font-size:15.9px;color:#000;letter-spacing:-0.05px;width:300px;justify-content:center;-webkit-text-stroke:0.2px #000;"><span>2022-05-08&nbsp;16:07:12</span></div>
<div class="a ln" style="left:205.6px;top:451.82px;height:24px;line-height:24px;font-size:15.9px;color:#000;letter-spacing:0.75px;width:300px;justify-content:center;-webkit-text-stroke:0.2px #000;"><span>admin</span></div>
<div class="a ln" style="left:344px;top:451.82px;height:24px;line-height:24px;font-size:15.9px;color:#000;width:300px;justify-content:center;-webkit-text-stroke:0.2px #000;"><span>0</span></div>
<div class="a ln" style="left:470.5px;top:451.42px;height:24px;line-height:24px;font-size:15.3px;color:#000;width:300px;justify-content:center;-webkit-text-stroke:0.2px #000;"><span class="cj" style="width:61.2px;height:15.3px;font-size:15.3px;">用户操作</span></div>
<div class="a ln" style="left:634.5px;top:451.42px;height:24px;line-height:24px;font-size:15.3px;color:#000;width:300px;justify-content:center;-webkit-text-stroke:0.2px #000;"><span class="cj" style="width:91.8px;height:15.3px;font-size:15.3px;">用户自动登录</span></div>
<div class="a ln" style="left:-109.5px;top:482.98px;height:24px;line-height:24px;font-size:15.9px;color:#000;letter-spacing:0.1px;width:300px;justify-content:center;-webkit-text-stroke:0.2px #000;"><span>63</span></div>
<div class="a ln" style="left:29px;top:482.98px;height:24px;line-height:24px;font-size:15.9px;color:#000;letter-spacing:-0.05px;width:300px;justify-content:center;-webkit-text-stroke:0.2px #000;"><span>2022-05-08&nbsp;16:05:35</span></div>
<div class="a ln" style="left:205.6px;top:482.98px;height:24px;line-height:24px;font-size:15.9px;color:#000;letter-spacing:0.75px;width:300px;justify-content:center;-webkit-text-stroke:0.2px #000;"><span>admin</span></div>
<div class="a ln" style="left:344px;top:482.98px;height:24px;line-height:24px;font-size:15.9px;color:#000;width:300px;justify-content:center;-webkit-text-stroke:0.2px #000;"><span>0</span></div>
<div class="a ln" style="left:470.5px;top:482.58px;height:24px;line-height:24px;font-size:15.3px;color:#000;width:300px;justify-content:center;-webkit-text-stroke:0.2px #000;"><span class="cj" style="width:61.2px;height:15.3px;font-size:15.3px;">用户操作</span></div>
<div class="a ln" style="left:634.5px;top:482.58px;height:24px;line-height:24px;font-size:15.3px;color:#000;width:300px;justify-content:center;-webkit-text-stroke:0.2px #000;"><span class="cj" style="width:61.2px;height:15.3px;font-size:15.3px;">用户登录</span></div>
<div class="a ln" style="left:-109.5px;top:514.14px;height:24px;line-height:24px;font-size:15.9px;color:#000;letter-spacing:0.1px;width:300px;justify-content:center;-webkit-text-stroke:0.2px #000;"><span>62</span></div>
<div class="a ln" style="left:29px;top:514.14px;height:24px;line-height:24px;font-size:15.9px;color:#000;letter-spacing:-0.05px;width:300px;justify-content:center;-webkit-text-stroke:0.2px #000;"><span>2022-05-08&nbsp;16:04:52</span></div>
<div class="a ln" style="left:205.6px;top:514.14px;height:24px;line-height:24px;font-size:15.9px;color:#000;letter-spacing:0.75px;width:300px;justify-content:center;-webkit-text-stroke:0.2px #000;"><span>admin</span></div>
<div class="a ln" style="left:344px;top:514.14px;height:24px;line-height:24px;font-size:15.9px;color:#000;width:300px;justify-content:center;-webkit-text-stroke:0.2px #000;"><span>0</span></div>
<div class="a ln" style="left:470.5px;top:513.74px;height:24px;line-height:24px;font-size:15.3px;color:#000;width:300px;justify-content:center;-webkit-text-stroke:0.2px #000;"><span class="cj" style="width:61.2px;height:15.3px;font-size:15.3px;">用户操作</span></div>
<div class="a ln" style="left:634.5px;top:513.74px;height:24px;line-height:24px;font-size:15.3px;color:#000;width:300px;justify-content:center;-webkit-text-stroke:0.2px #000;"><span class="cj" style="width:91.8px;height:15.3px;font-size:15.3px;">用户自动登录</span></div>
<div class="a ln" style="left:-109.5px;top:545.3px;height:24px;line-height:24px;font-size:15.9px;color:#000;letter-spacing:0.1px;width:300px;justify-content:center;-webkit-text-stroke:0.2px #000;"><span>61</span></div>
<div class="a ln" style="left:29px;top:545.3px;height:24px;line-height:24px;font-size:15.9px;color:#000;letter-spacing:-0.05px;width:300px;justify-content:center;-webkit-text-stroke:0.2px #000;"><span>2022-05-08&nbsp;15:54:38</span></div>
<div class="a ln" style="left:205.6px;top:545.3px;height:24px;line-height:24px;font-size:15.9px;color:#000;letter-spacing:0.75px;width:300px;justify-content:center;-webkit-text-stroke:0.2px #000;"><span>admin</span></div>
<div class="a ln" style="left:344px;top:545.3px;height:24px;line-height:24px;font-size:15.9px;color:#000;width:300px;justify-content:center;-webkit-text-stroke:0.2px #000;"><span>0</span></div>
<div class="a ln" style="left:470.5px;top:544.9px;height:24px;line-height:24px;font-size:15.3px;color:#000;width:300px;justify-content:center;-webkit-text-stroke:0.2px #000;"><span class="cj" style="width:61.2px;height:15.3px;font-size:15.3px;">用户操作</span></div>
<div class="a ln" style="left:634.5px;top:544.9px;height:24px;line-height:24px;font-size:15.3px;color:#000;width:300px;justify-content:center;-webkit-text-stroke:0.2px #000;"><span class="cj" style="width:91.8px;height:15.3px;font-size:15.3px;">用户自动登录</span></div>
<div class="a ln" style="left:-109.5px;top:576.46px;height:24px;line-height:24px;font-size:15.9px;color:#000;letter-spacing:0.1px;width:300px;justify-content:center;-webkit-text-stroke:0.2px #000;"><span>60</span></div>
<div class="a ln" style="left:29px;top:576.46px;height:24px;line-height:24px;font-size:15.9px;color:#000;letter-spacing:-0.05px;width:300px;justify-content:center;-webkit-text-stroke:0.2px #000;"><span>2022-05-08&nbsp;15:51:13</span></div>
<div class="a ln" style="left:205.6px;top:576.46px;height:24px;line-height:24px;font-size:15.9px;color:#000;letter-spacing:0.75px;width:300px;justify-content:center;-webkit-text-stroke:0.2px #000;"><span>admin</span></div>
<div class="a ln" style="left:344px;top:576.46px;height:24px;line-height:24px;font-size:15.9px;color:#000;width:300px;justify-content:center;-webkit-text-stroke:0.2px #000;"><span>0</span></div>
<div class="a ln" style="left:470.5px;top:576.06px;height:24px;line-height:24px;font-size:15.3px;color:#000;width:300px;justify-content:center;-webkit-text-stroke:0.2px #000;"><span class="cj" style="width:61.2px;height:15.3px;font-size:15.3px;">用户操作</span></div>
<div class="a ln" style="left:634.5px;top:576.06px;height:24px;line-height:24px;font-size:15.3px;color:#000;width:300px;justify-content:center;-webkit-text-stroke:0.2px #000;"><span class="cj" style="width:91.8px;height:15.3px;font-size:15.3px;">用户自动登录</span></div>
</div>
<div class="a" style="left:1051px;top:125.7px;width:36.8px;height:36.8px;border-radius:50%;background:#1185eb"></div>
<div class="a" style="left:1059.8px;top:135px;width:13px;height:12.5px;background:#62adf3;border-radius:1px"></div>
<div class="a" style="left:1063.4px;top:138.4px;width:15.8px;height:15.2px;background:#1185eb"></div>
<div class="a" style="left:1064.4px;top:139.4px;width:13.8px;height:13.2px;background:#fff;border-radius:1px;color:#1678da;font-family:'Liberation Serif',serif;font-size:10.2px;font-weight:bold;line-height:14.6px;text-align:center">W</div>
<div class="a" style="left:1123px;top:112px;width:20px;height:654px;background:#f1f1f1"></div>
<div class="a" style="left:1123.2px;top:137px;width:18.5px;height:136.5px;background:#c8c8c8"></div>
<svg class="a" style="left:1124px;top:116px" width="18" height="16" viewBox="0 0 18 16" fill="none" stroke="#4d4d4d" stroke-width="2"><path d="M4.2 10.4L8.6 5.6L13 10.4"/></svg>
<svg class="a" style="left:1124px;top:746px" width="18" height="16" viewBox="0 0 18 16" fill="none" stroke="#4d4d4d" stroke-width="2"><path d="M4.4 6L8.8 10.8L13.2 6"/></svg>
<div class="a" style="left:48px;top:766px;width:1095px;height:20px;background:#f1f1f1"></div>
<div class="a" style="left:68.2px;top:766.4px;width:812.6px;height:18.1px;background:#cbcbcb"></div>
<svg class="a" style="left:50px;top:767px" width="16" height="18" viewBox="0 0 16 18" fill="none" stroke="#4d4d4d" stroke-width="2"><path d="M10.6 4.2L5.4 8.6L10.6 13"/></svg>
<svg class="a" style="left:1104px;top:767px" width="16" height="18" viewBox="0 0 16 18" fill="none" stroke="#4d4d4d" stroke-width="2"><path d="M5.2 4.2L10.4 8.6L5.2 13"/></svg>
<svg class="a" style="left:1130px;top:776px" width="8" height="8" viewBox="0 0 8 8" fill="#b8b8b8"><rect x="6.4" y="0" width="1.6" height="1.6"/><rect x="3.2" y="3.2" width="1.6" height="1.6"/><rect x="6.4" y="3.2" width="1.6" height="1.6"/><rect x="0" y="6.4" width="1.6" height="1.6"/><rect x="3.2" y="6.4" width="1.6" height="1.6"/><rect x="6.4" y="6.4" width="1.6" height="1.6"/></svg>
</div>
</body></html>
